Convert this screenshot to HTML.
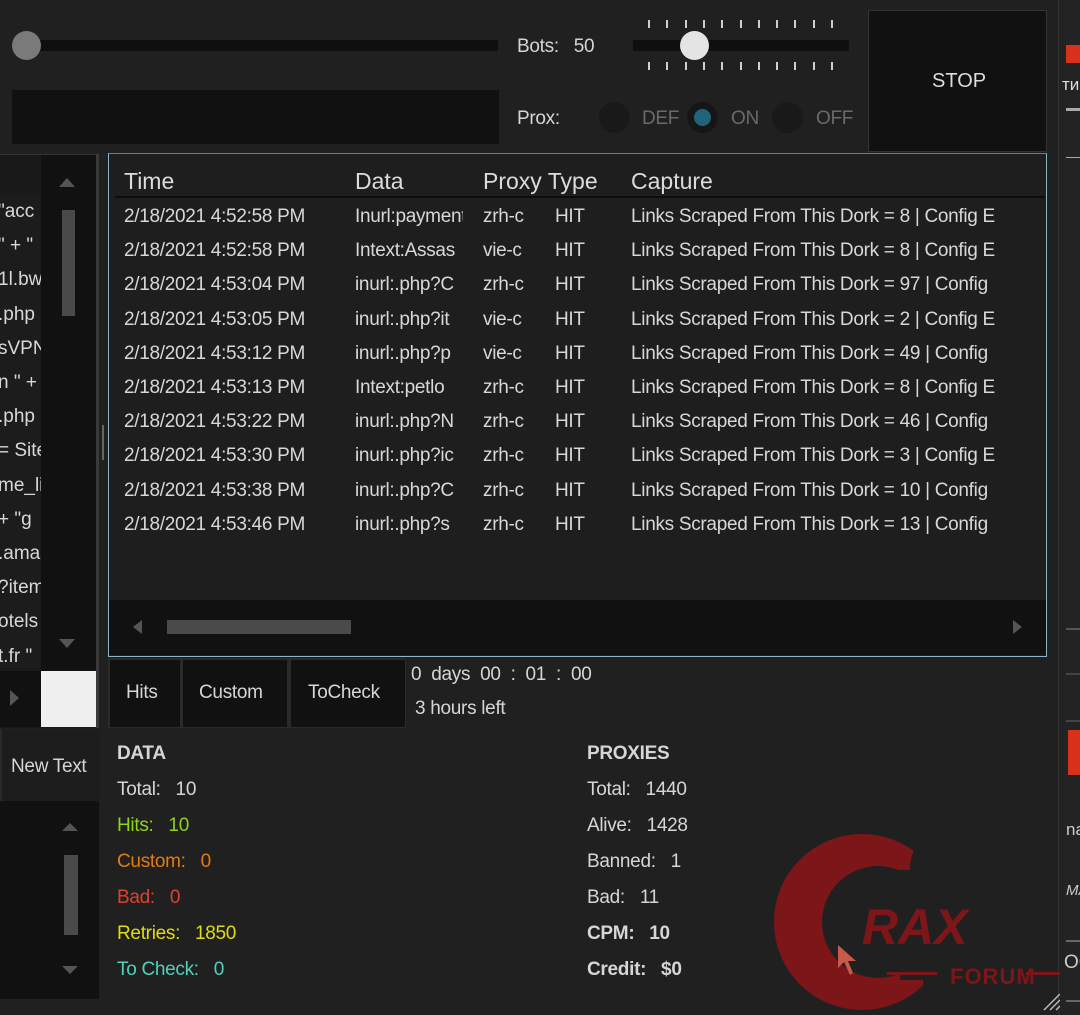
<!DOCTYPE html>
<html><head><meta charset="utf-8"><style>
*{margin:0;padding:0;box-sizing:border-box}
body{width:1080px;height:1015px;background:#202020;overflow:hidden;position:relative;font-family:"Liberation Sans",sans-serif;color:#d6d6d6}
.a{position:absolute;white-space:nowrap}
.t{font-size:19px;letter-spacing:-0.3px}
.row div{position:absolute;font-size:19px;color:#d8d8d8;overflow:hidden;white-space:nowrap;letter-spacing:-0.3px}
.lbl{font-size:19px;letter-spacing:-0.3px}
.tick{position:absolute;width:2px;height:8px;background:#cfcfcf}
</style></head><body>
<div class="a" style="left:26px;top:40px;width:472px;height:11px;background:#0f0f0f"></div>
<div class="a" style="left:12px;top:31px;width:29px;height:29px;border-radius:50%;background:#7a7a7a"></div>
<div class="a" style="left:12px;top:90px;width:487px;height:54px;background:#111"></div>
<div class="a t" style="left:517px;top:36px">Bots:&nbsp;&nbsp; 50</div>
<div class="a t" style="left:517px;top:108px">Prox:</div>
<div class="a" style="left:633px;top:40px;width:216px;height:11px;background:#0f0f0f"></div>
<div id="ticks"></div>
<div class="a" style="left:680px;top:31px;width:29px;height:29px;border-radius:50%;background:#e4e4e4"></div>
<div class="a" style="left:599px;top:102px;width:31px;height:31px;border-radius:50%;background:#191919"></div>
<div class="a t" style="left:642px;top:108px;color:#6a6a6a">DEF</div>
<div class="a" style="left:687px;top:102px;width:31px;height:31px;border-radius:50%;background:#161616"></div>
<div class="a" style="left:694px;top:109px;width:17px;height:17px;border-radius:50%;background:#1f6478"></div>
<div class="a t" style="left:731px;top:108px;color:#6a6a6a">ON</div>
<div class="a" style="left:772px;top:102px;width:31px;height:31px;border-radius:50%;background:#191919"></div>
<div class="a t" style="left:816px;top:108px;color:#6a6a6a">OFF</div>
<div class="a" style="left:868px;top:10px;width:179px;height:142px;background:#111;border:1px solid #333"></div>
<div class="a" style="left:932px;top:70px;font-size:20px;color:#ddd">STOP</div>
<div class="a" style="left:1058px;top:0;width:22px;height:1015px;background:#232323;border-left:1px solid #333"></div>
<div class="a" style="left:1066px;top:45px;width:14px;height:18px;background:#d8311c"></div>
<div class="a" style="left:1062px;top:75px;font-size:17px;color:#ddd">ти</div>
<div class="a" style="left:1066px;top:108px;width:14px;height:3px;background:#aaa"></div>
<div class="a" style="left:1066px;top:157px;width:14px;height:1px;background:#aaa"></div>
<div class="a" style="left:1066px;top:628px;width:14px;height:2px;background:#555"></div>
<div class="a" style="left:1066px;top:673px;width:14px;height:2px;background:#444"></div>
<div class="a" style="left:1066px;top:720px;width:14px;height:2px;background:#444"></div>
<div class="a" style="left:1068px;top:730px;width:12px;height:45px;background:#d8311c"></div>
<div class="a" style="left:1066px;top:820px;font-size:17px;color:#ccc">na</div>
<div class="a" style="left:1066px;top:882px;font-size:15px;color:#ccc;font-style:italic">MA</div>
<div class="a" style="left:1066px;top:940px;width:14px;height:2px;background:#666"></div>
<div class="a" style="left:1064px;top:952px;font-size:19px;color:#ccc">OC</div>
<div class="a" style="left:1066px;top:1000px;width:14px;height:2px;background:#666"></div>
<div class="a" style="left:0;top:154px;width:97px;height:574px;background:#191919;border-top:1px solid #333"></div>
<div class="a" style="left:0;top:195px;width:41px;height:473px;overflow:hidden;font-size:19px;line-height:34.2px;color:#d8d8d8;background:#1c1c1c">
<div style="margin-left:-2px"> "acc<br>" + "<br>1l.bw<br>.php<br>sVPN<br>n " +<br>.php<br>= Site<br>me_li<br>+ "g<br>.ama<br>?item<br>otels<br>t.fr "</div></div>
<div class="a" style="left:41px;top:155px;width:55px;height:516px;background:#111"></div>
<div class="a" style="left:59px;top:178px;border:8px solid transparent;border-bottom:9px solid #555;border-top:0"></div>
<div class="a" style="left:62px;top:210px;width:13px;height:106px;background:#4a4a4a"></div>
<div class="a" style="left:59px;top:639px;border:8px solid transparent;border-top:9px solid #555;border-bottom:0"></div>
<div class="a" style="left:0;top:671px;width:41px;height:56px;background:#111"></div>
<div class="a" style="left:10px;top:690px;border:8px solid transparent;border-left:9px solid #555;border-right:0"></div>
<div class="a" style="left:41px;top:671px;width:55px;height:56px;background:#f0f0f0"></div>
<div class="a" style="left:96px;top:154px;width:3px;height:574px;background:#3a3a3a"></div>
<div class="a" style="left:102px;top:425px;width:2px;height:35px;background:#666"></div>
<div class="a" style="left:108px;top:153px;width:939px;height:504px;background:#1e1e1e;border:1px solid #8fb4c8;border-top-color:#4f86a8"></div>
<div class="a" style="left:115px;top:196px;width:930px;height:2px;background:#0c0c0c"></div>
<div class="a" style="left:124px;top:168px;font-size:23px;color:#dcdcdc">Time</div>
<div class="a" style="left:355px;top:168px;font-size:23px;color:#dcdcdc">Data</div>
<div class="a" style="left:483px;top:168px;font-size:23px;color:#dcdcdc">Proxy Type</div>
<div class="a" style="left:631px;top:168px;font-size:23px;color:#dcdcdc">Capture</div>
<div id="rows"></div>
<div class="a" style="left:109px;top:600px;width:937px;height:55px;background:#111"></div>
<div class="a" style="left:133px;top:620px;border:7px solid transparent;border-right:9px solid #555;border-left:0"></div>
<div class="a" style="left:167px;top:620px;width:184px;height:14px;background:#4a4a4a"></div>
<div class="a" style="left:1013px;top:620px;border:7px solid transparent;border-left:9px solid #555;border-right:0"></div>
<div class="a" style="left:108px;top:658px;width:298px;height:70px;background:#2a2a2a"></div>
<div class="a" style="left:110px;top:660px;width:70px;height:67px;background:#111"></div>
<div class="a" style="left:183px;top:660px;width:104px;height:67px;background:#111"></div>
<div class="a" style="left:291px;top:660px;width:114px;height:67px;background:#111"></div>
<div class="a t" style="left:126px;top:682px">Hits</div>
<div class="a t" style="left:199px;top:682px">Custom</div>
<div class="a t" style="left:308px;top:682px">ToCheck</div>
<div class="a t" style="left:411px;top:664px">0&nbsp; days&nbsp; 00&nbsp; :&nbsp; 01&nbsp; :&nbsp; 00</div>
<div class="a t" style="left:415px;top:698px">3 hours left</div>
<div class="a" style="left:0;top:729px;width:100px;height:72px;background:#1d1d1d;border-left:2px solid #2a2a2a"></div>
<div class="a t" style="left:11px;top:756px">New Text</div>
<div class="a" style="left:0;top:801px;width:99px;height:198px;background:#111"></div>
<div class="a" style="left:62px;top:823px;border:8px solid transparent;border-bottom:8px solid #555;border-top:0"></div>
<div class="a" style="left:64px;top:855px;width:14px;height:80px;background:#4a4a4a"></div>
<div class="a" style="left:62px;top:966px;border:8px solid transparent;border-top:8px solid #555;border-bottom:0"></div>
<div class="a lbl" style="left:117px;top:743px;font-weight:bold">DATA</div>
<div class="a lbl" style="left:117px;top:779px">Total:&nbsp;&nbsp; 10</div>
<div class="a lbl" style="left:117px;top:815px;color:#8ed21a">Hits:&nbsp;&nbsp; 10</div>
<div class="a lbl" style="left:117px;top:851px;color:#e27b10">Custom:&nbsp;&nbsp; 0</div>
<div class="a lbl" style="left:117px;top:887px;color:#e0412e">Bad:&nbsp;&nbsp; 0</div>
<div class="a lbl" style="left:117px;top:923px;color:#e0dc10">Retries:&nbsp;&nbsp; 1850</div>
<div class="a lbl" style="left:117px;top:959px;color:#4fd2bd">To Check:&nbsp;&nbsp; 0</div>
<svg class="a" style="left:760px;top:830px" width="300" height="185" viewBox="760 830 300 185">
<defs><mask id="m"><rect x="760" y="830" width="300" height="185" fill="#fff"/>
<circle cx="878" cy="922" r="56" fill="#000"/><circle cx="950" cy="868" r="40" fill="#000"/><circle cx="965" cy="978" r="42" fill="#000"/><rect x="900" y="870" width="80" height="110" fill="#000"/></mask></defs>
<circle cx="862" cy="922" r="88" fill="#7d1619" mask="url(#m)"/>
<text x="862" y="944" font-family="Liberation Sans" font-weight="bold" font-style="italic" font-size="50" fill="#7d1619">RAX</text>
<rect x="887" y="972" width="50" height="3" fill="#7d1619"/>
<text x="950" y="984" font-family="Liberation Sans" font-weight="bold" font-size="22" fill="#7d1619" letter-spacing="1">FORUM</text>
<rect x="1026" y="972" width="34" height="3" fill="#7d1619"/>
<path d="M838 945 L838 968 L844 962 L850 975 L853 973 L848 961 L856 961 Z" fill="#c75a4b"/>
<path d="M1044 1010 L1060 994 M1050 1010 L1060 1000 M1056 1010 L1060 1006" stroke="#bbb" stroke-width="1.5"/>
</svg>
<div class="a lbl" style="left:587px;top:743px;font-weight:bold">PROXIES</div>
<div class="a lbl" style="left:587px;top:779px">Total:&nbsp;&nbsp; 1440</div>
<div class="a lbl" style="left:587px;top:815px">Alive:&nbsp;&nbsp; 1428</div>
<div class="a lbl" style="left:587px;top:851px">Banned:&nbsp;&nbsp; 1</div>
<div class="a lbl" style="left:587px;top:887px">Bad:&nbsp;&nbsp; 11</div>
<div class="a lbl" style="left:587px;top:923px;font-weight:bold">CPM:&nbsp;&nbsp; 10</div>
<div class="a lbl" style="left:587px;top:959px;font-weight:bold">Credit:&nbsp;&nbsp; $0</div>
<script>
var d=[["2/18/2021 4:52:58 PM","Inurl:payment","zrh-c","8 | Config E"],["2/18/2021 4:52:58 PM","Intext:Assas","vie-c","8 | Config E"],["2/18/2021 4:53:04 PM","inurl:.php?C","zrh-c","97 | Config"],["2/18/2021 4:53:05 PM","inurl:.php?it","vie-c","2 | Config E"],["2/18/2021 4:53:12 PM","inurl:.php?p","vie-c","49 | Config"],["2/18/2021 4:53:13 PM","Intext:petlo","zrh-c","8 | Config E"],["2/18/2021 4:53:22 PM","inurl:.php?N","zrh-c","46 | Config"],["2/18/2021 4:53:30 PM","inurl:.php?ic","zrh-c","3 | Config E"],["2/18/2021 4:53:38 PM","inurl:.php?C","zrh-c","10 | Config"],["2/18/2021 4:53:46 PM","inurl:.php?s","zrh-c","13 | Config"]];
var h="";d.forEach(function(r,i){var y=206+i*34.2;h+='<div class="row"><div style="left:124px;top:'+y+'px;width:225px">'+r[0]+'</div><div style="left:355px;top:'+y+'px;width:108px">'+r[1]+'</div><div style="left:483px;top:'+y+'px;width:50px">'+r[2]+'</div><div style="left:555px;top:'+y+'px">HIT</div><div style="left:631px;top:'+y+'px;width:414px">Links Scraped From This Dork = '+r[3]+'</div></div>';});
document.getElementById("rows").innerHTML=h;
var t="";for(var i=0;i<11;i++){var x=648+i*18.3;t+='<div class="tick" style="left:'+x+'px;top:20px"></div><div class="tick" style="left:'+x+'px;top:62px"></div>';}
document.getElementById("ticks").innerHTML=t;
</script>
</body></html>
